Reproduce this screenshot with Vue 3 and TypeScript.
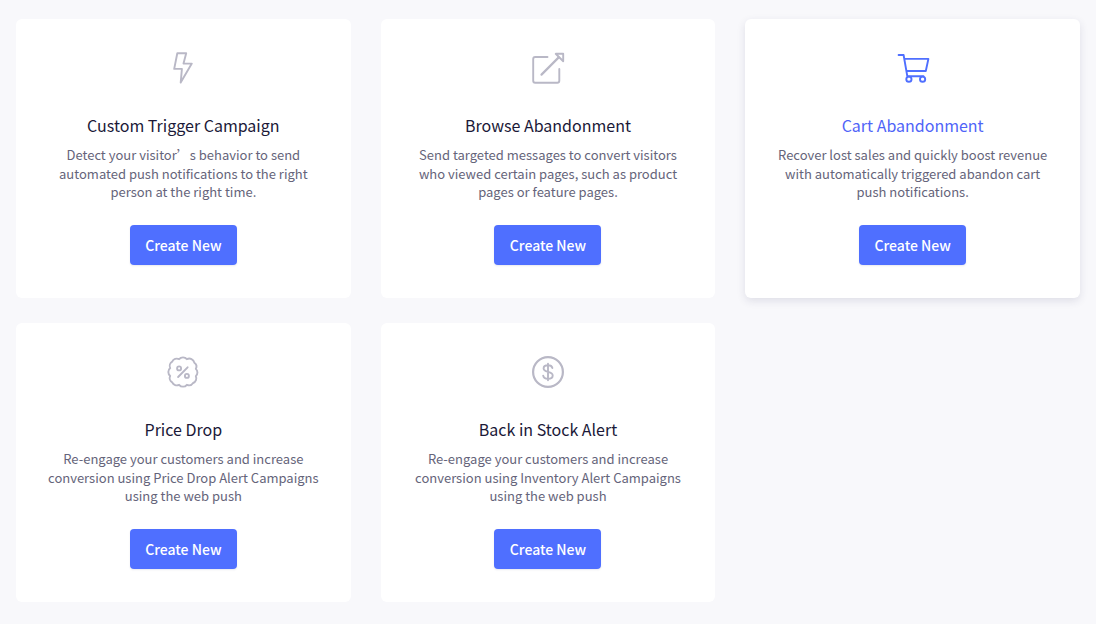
<script setup lang="ts">
type IconName = 'bolt' | 'external' | 'cart' | 'discount' | 'dollar'

interface Campaign {
  title: string
  lines: string[]
  icon: IconName
  active?: boolean
}

const campaigns: Campaign[] = [
  {
    title: 'Custom Trigger Campaign',
    lines: ['Detect your visitor’s behavior to send', 'automated push notifications to the right', 'person at the right time.'],
    icon: 'bolt',
  },
  {
    title: 'Browse Abandonment',
    lines: ['Send targeted messages to convert visitors', 'who viewed certain pages, such as product', 'pages or feature pages.'],
    icon: 'external',
  },
  {
    title: 'Cart Abandonment',
    lines: ['Recover lost sales and quickly boost revenue', 'with automatically triggered abandon cart', 'push notifications.'],
    icon: 'cart',
    active: true,
  },
  {
    title: 'Price Drop',
    lines: ['Re-engage your customers and increase', 'conversion using Price Drop Alert Campaigns', 'using the web push'],
    icon: 'discount',
  },
  {
    title: 'Back in Stock Alert',
    lines: ['Re-engage your customers and increase', 'conversion using Inventory Alert Campaigns', 'using the web push'],
    icon: 'dollar',
  },
]
</script>

<template>
  <main class="grid">
    <section v-for="c in campaigns" :key="c.title" class="card" :class="{ active: c.active }">
      <svg class="icon" viewBox="0 0 34 34" fill="none" stroke="currentColor" stroke-width="1.9" stroke-linecap="round" stroke-linejoin="round">
        <path v-if="c.icon === 'bolt'" d="M11.3 2.2H20.2L17.5 12.6H25.8L14.7 31.6L15.9 17.9H8.2Z" />
        <template v-else-if="c.icon === 'external'">
          <path d="M16.5 6H4.2Q2.2 6 2.2 8V29.8Q2.2 31.8 4.2 31.8H26.3Q28.3 31.8 28.3 29.8V18" />
          <path d="M10.5 23.6L27.7 6.4" stroke-width="2.2" />
          <path d="M24.7 2.8H32.2V10.2Z" />
        </template>
        <template v-else-if="c.icon === 'cart'">
          <path d="M2.6 4H7.6L11.3 25.2H27.5M8.2 7.9H32.4L29.8 20H10.6" />
          <circle cx="12.9" cy="28.2" r="2.6" />
          <circle cx="26.6" cy="28.2" r="2.6" />
        </template>
        <template v-else-if="c.icon === 'discount'">
          <path d="M13.1 4.2A5 5 0 0 1 20.9 4.2A5 5 0 0 1 28.3 7.7A4.8 4.8 0 0 1 29.8 13.9A4.8 4.8 0 0 1 29.8 21.1A5 5 0 0 1 27.1 28A5 5 0 0 1 20.9 29.8A5 5 0 0 1 13.1 29.8A5 5 0 0 1 6.2 27.4A5 5 0 0 1 4.2 20.9A5 5 0 0 1 4.2 13.1A5 5 0 0 1 6.2 6.6A5 5 0 0 1 13.1 4.2Z" />
          <path d="M12.1 22L21.6 12.3" />
          <circle cx="13.1" cy="13.4" r="2" />
          <circle cx="20.9" cy="20.9" r="2" />
        </template>
        <template v-else>
          <circle cx="17" cy="17" r="14.9" stroke-width="2.2" />
          <path d="M21.4 13C21 11.3 19.5 10.3 17 10.3C14.4 10.3 12.6 11.4 12.6 13.5C12.6 18 21.7 15.6 21.7 20.4C21.7 22.5 19.8 23.8 17 23.8C14.2 23.8 12.5 22.6 12.2 20.6M17 8.8V25.2" />
        </template>
      </svg>
      <h2 class="title">{{ c.title }}</h2>
      <p class="text">
        <span v-for="line in c.lines" :key="line" class="line">{{ line }}</span>
      </p>
      <button type="button" class="create">Create New</button>
    </section>
  </main>
</template>

<style>
body {
  background: #f8f8fb;
}
</style>

<style scoped>
.grid {
  box-sizing: border-box;
  height: 624px;
  padding: 19px 16px 22px;
  display: grid;
  grid-template-columns: repeat(3, 1fr);
  grid-template-rows: 279px 279px;
  gap: 25px 30px;
  font-family: "Noto Sans CJK SC", "Noto Sans", sans-serif;
}
.card {
  display: flex;
  flex-direction: column;
  align-items: center;
  background: #fff;
  border-radius: 6px;
  padding-top: 32px;
  box-sizing: border-box;
  color: #b9b8c6;
}
.card.active {
  color: #4f6fff;
  box-shadow: 0 3px 8px rgba(40, 40, 90, 0.12);
}
.icon {
  width: 34px;
  height: 34px;
  flex: none;
}
.title {
  margin: 28px 0 0;
  font-size: 16px;
  line-height: 24px;
  font-weight: 400;
  color: #1b1938;
  white-space: nowrap;
}
.active .title {
  color: #4f64f8;
}
.text {
  margin: 9px 0 0;
  font-size: 13px;
  line-height: 18.5px;
  color: #65647a;
}
.line {
  display: block;
  text-align: center;
  white-space: nowrap;
}
.create {
  margin-top: 23.5px;
  width: 107px;
  height: 40px;
  padding: 0;
  border: 0;
  border-radius: 4px;
  background: #4f6fff;
  color: #fff;
  font-family: inherit;
  font-size: 14px;
  font-weight: 500;
  box-shadow: 0 1px 2px rgba(40, 40, 90, 0.1);
}
</style>
